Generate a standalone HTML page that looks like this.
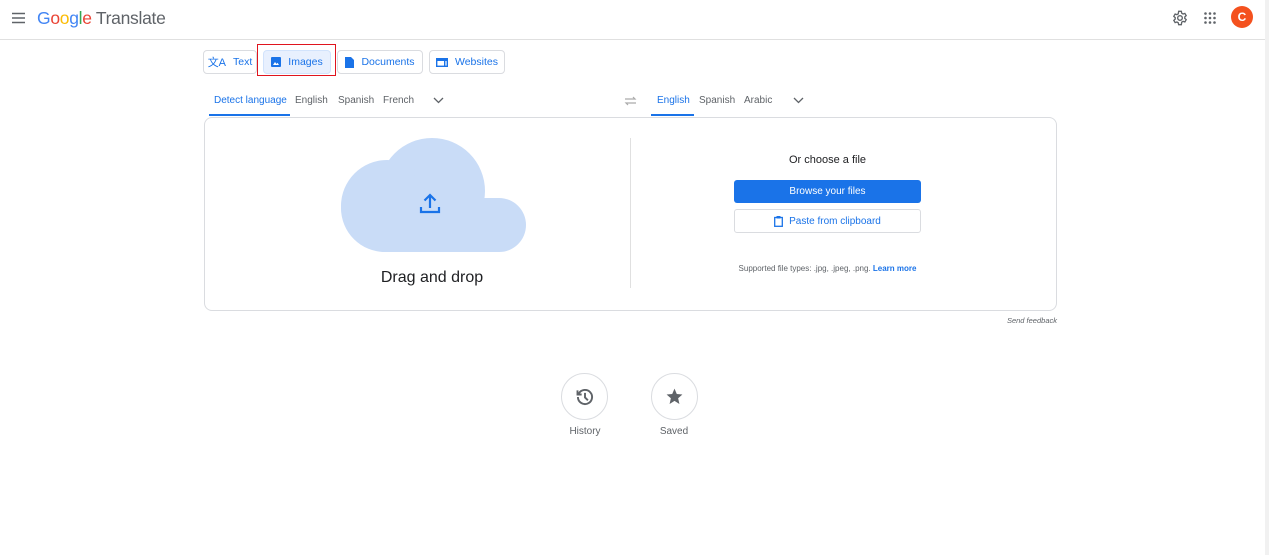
<!DOCTYPE html><html><head><style>
body{margin:0;width:1269px;height:555px;background:#fff;font-family:"Liberation Sans",sans-serif;position:relative;overflow:hidden;color:#3c4043}
.a{position:absolute}
.tab{position:absolute;top:50px;height:24px;border:1px solid #dadce0;border-radius:4px;box-sizing:border-box;font-size:10.5px;color:#1a73e8;display:flex;align-items:center;justify-content:center;gap:7px}
.l{position:absolute;top:95px;font-size:10px;color:#5f6368}
</style></head><body>
<div class="a" style="left:0;top:39px;width:1265px;height:1px;background:#e0e0e0"></div>
<div class="a" style="left:1265px;top:0;width:4px;height:555px;background:#f1f1f1"></div>
<svg class="a" style="left:12px;top:12px" width="14" height="12"><path d="M0 1.5h13M0 6h13M0 10.5h13" stroke="#5f6368" stroke-width="1.5"/></svg>
<div class="a" style="left:37px;top:8px;font-size:17.5px;letter-spacing:-0.3px"><span style="color:#4285f4">G</span><span style="color:#ea4335">o</span><span style="color:#fbbc05">o</span><span style="color:#4285f4">g</span><span style="color:#34a853">l</span><span style="color:#ea4335">e</span> <span style="color:#5f6368">Translate</span></div>
<svg class="a" style="left:1172px;top:10px" width="16" height="16" viewBox="0 0 24 24"><path fill="none" stroke="#5f6368" stroke-width="2" d="M12 8.5a3.5 3.5 0 1 0 0 7a3.5 3.5 0 1 0 0-7zM10 2h4l.6 2.8 2 1.2 2.7-.9 2 3.4-2.1 1.9v2.2l2.1 1.9-2 3.4-2.7-.9-2 1.2L14 22h-4l-.6-2.8-2-1.2-2.7.9-2-3.4 2.1-1.9v-2.2L2.7 9.5l2-3.4 2.7.9 2-1.2z"/></svg>
<svg class="a" style="left:1204px;top:12px" width="12" height="12"><g fill="#5f6368"><circle cx="1.5" cy="1.5" r="1.3"/><circle cx="6" cy="1.5" r="1.3"/><circle cx="10.5" cy="1.5" r="1.3"/><circle cx="1.5" cy="6" r="1.3"/><circle cx="6" cy="6" r="1.3"/><circle cx="10.5" cy="6" r="1.3"/><circle cx="1.5" cy="10.5" r="1.3"/><circle cx="6" cy="10.5" r="1.3"/><circle cx="10.5" cy="10.5" r="1.3"/></g></svg>
<div class="a" style="left:1231px;top:6px;width:22px;height:22px;border-radius:50%;background:#f4511e;color:#fff;font-size:12px;font-weight:bold;text-align:center;line-height:22px">C</div>

<div class="tab" style="left:203px;width:54px"><span style="font-size:11px">文A</span>Text</div>
<div class="a" style="left:257px;top:44px;width:79px;height:32px;border:1.5px solid #e0141e;box-sizing:border-box"></div>
<div class="tab" style="left:263px;width:68px;background:#e8f0fe;border-color:#d2e3fc"><svg width="10" height="10"><rect width="10" height="10" rx="1" fill="#1a73e8"/><path d="M2 8l2-3 1.5 2 1-1.3L8 8z" fill="#fff"/></svg>Images</div>
<div class="tab" style="left:337px;width:86px"><svg width="9" height="11"><path d="M0 0h6l3 3v8H0z" fill="#1a73e8"/></svg>Documents</div>
<div class="tab" style="left:429px;width:76px"><svg width="12" height="9"><rect x=".7" y=".7" width="10.6" height="7.6" fill="none" stroke="#1a73e8" stroke-width="1.4"/><rect x="1" y="1" width="10" height="2" fill="#1a73e8"/><rect x="8" y="3" width="1.4" height="5" fill="#1a73e8"/></svg>Websites</div>

<div class="l" style="left:214px;color:#1a73e8">Detect language</div>
<div class="a" style="left:209px;top:114px;width:81px;height:2px;background:#1a73e8"></div>
<div class="l" style="left:295px">English</div><div class="l" style="left:338px">Spanish</div><div class="l" style="left:383px">French</div>
<svg class="a" style="left:433px;top:97px" width="11" height="7"><path d="M1 1l4.5 4.5L10 1" fill="none" stroke="#5f6368" stroke-width="1.3"/></svg>
<svg class="a" style="left:624px;top:96px" width="13" height="10"><path d="M1 3h10l-2-2M12 7H2l2 2" fill="none" stroke="#aaa" stroke-width="1.2"/></svg>
<div class="l" style="left:657px;color:#1a73e8">English</div>
<div class="a" style="left:651px;top:114px;width:43px;height:2px;background:#1a73e8"></div>
<div class="l" style="left:699px">Spanish</div><div class="l" style="left:744px">Arabic</div>
<svg class="a" style="left:793px;top:97px" width="11" height="7"><path d="M1 1l4.5 4.5L10 1" fill="none" stroke="#5f6368" stroke-width="1.3"/></svg>

<div class="a" style="left:204px;top:117px;width:853px;height:194px;border:1px solid #dadce0;border-radius:8px;box-sizing:border-box"></div>
<div class="a" style="left:630px;top:138px;width:1px;height:150px;background:#e0e0e0"></div>
<svg class="a" style="left:339px;top:138px" width="188" height="115"><g fill="#c9dcf7"><circle cx="93" cy="53" r="53"/><circle cx="48" cy="68" r="46"/><circle cx="160" cy="87" r="27"/><rect x="46" y="60" width="114" height="54"/><circle cx="46" cy="70" r="44"/></g><path d="M91 70v-13M85.5 62.5l5.5-5.5 5.5 5.5M82 69v5h18v-5" fill="none" stroke="#1a73e8" stroke-width="2.2"/></svg>
<div class="a" style="left:332px;top:269px;width:200px;text-align:center;font-size:16px;color:#202124">Drag and drop</div>
<div class="a" style="left:734px;top:154px;width:187px;text-align:center;font-size:11px;color:#202124">Or choose a file</div>
<div class="a" style="left:734px;top:180px;width:187px;height:23px;background:#1a73e8;border-radius:3px;color:#fff;font-size:10px;text-align:center;line-height:23px">Browse your files</div>
<div class="a" style="left:734px;top:209px;width:187px;height:24px;border:1px solid #dadce0;border-radius:3px;box-sizing:border-box;color:#1a73e8;font-size:10px;display:flex;align-items:center;justify-content:center;gap:6px"><svg width="9" height="11"><rect x=".7" y="1.5" width="7.6" height="8.8" fill="none" stroke="#1a73e8" stroke-width="1.3"/><rect x="2.5" y="0" width="4" height="2.5" fill="#1a73e8"/></svg>Paste from clipboard</div>
<div class="a" style="left:700px;top:264px;width:255px;text-align:center;font-size:8px;color:#5f6368">Supported file types: .jpg, .jpeg, .png. <b style="color:#1a73e8">Learn more</b></div>
<div class="a" style="left:957px;top:316px;width:100px;text-align:right;font-size:7.5px;font-style:italic;color:#5f6368">Send feedback</div>

<div class="a" style="left:561px;top:373px;width:47px;height:47px;border:1px solid #dadce0;border-radius:50%;box-sizing:border-box"></div>
<svg class="a" style="left:575px;top:387px" width="20" height="20" viewBox="0 0 24 24"><path d="M4.5 8A8.5 8.5 0 1 1 3.5 12M3 4v5h5M12 7v5.5l3.5 3.5" fill="none" stroke="#5f6368" stroke-width="2.3"/></svg>
<div class="a" style="left:545px;top:426px;width:80px;text-align:center;font-size:10px;color:#5f6368">History</div>
<div class="a" style="left:651px;top:373px;width:47px;height:47px;border:1px solid #dadce0;border-radius:50%;box-sizing:border-box"></div>
<svg class="a" style="left:665px;top:387px" width="19" height="19" viewBox="0 0 24 24"><path d="M12 2l2.9 6.9 7.1.6-5.4 4.7 1.6 7.3L12 17.6 5.8 21.5l1.6-7.3L2 9.5l7.1-.6z" fill="#5f6368"/></svg>
<div class="a" style="left:634px;top:426px;width:80px;text-align:center;font-size:10px;color:#5f6368">Saved</div>
</body></html>
